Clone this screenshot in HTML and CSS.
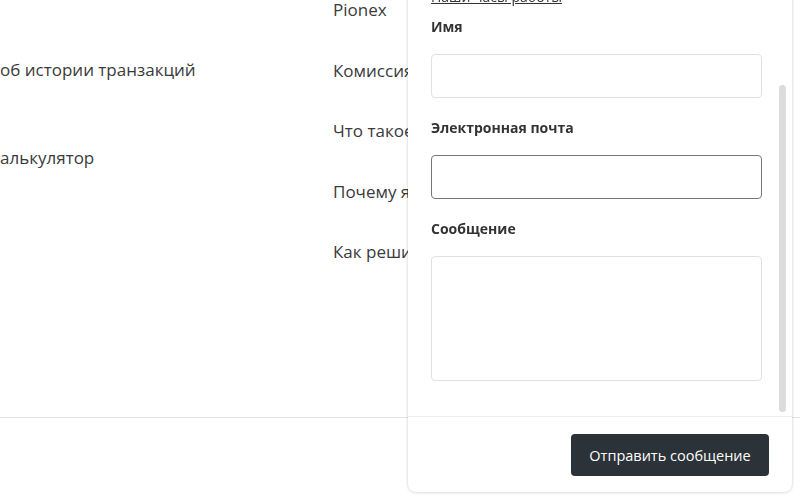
FILE: index.html
```html
<!DOCTYPE html>
<html lang="ru">
<head>
<meta charset="utf-8">
<link rel="stylesheet" href="styles.css">
</head>
<body>
<main class="page">
  <ul class="col col-left">
    <li>об истории транзакций</li>
    <li>алькулятор</li>
  </ul>
  <ul class="col col-mid">
    <li>Pionex</li>
    <li>Комиссия</li>
    <li>Что такое</li>
    <li>Почему я</li>
    <li>Как решить</li>
  </ul>
</main>
<footer class="page-footer"></footer>

<aside class="panel">
  <div class="panel-body">
    <a class="hours-link" href="#">Наши часы работы</a>
    <label class="field-label">Имя</label>
    <input class="field" type="text">
    <label class="field-label">Электронная почта</label>
    <input class="field field-focus" type="text">
    <label class="field-label">Сообщение</label>
    <textarea class="field field-area"></textarea>
  </div>
  <div class="scroll-thumb"></div>
  <div class="panel-footer">
    <button class="send-btn" type="button">Отправить сообщение</button>
  </div>
</aside>
</body>
</html>
```
FILE: styles.css
```css
* { box-sizing: border-box; }
html, body { margin: 0; padding: 0; }
body {
  font-family: "Open Sans", "Noto Sans", sans-serif;
  color: #333;
  background: #fff;
  width: 800px;
  height: 499px;
  overflow: hidden;
}
.page {
  display: grid;
  grid-template-columns: 333px 1fr;
  height: 417px;
}
.col {
  list-style: none;
  margin: 0;
  padding: 0;
  display: flex;
  flex-direction: column;
  font-size: 17px;
  line-height: 20px;
  color: #3a3a3a;
  white-space: nowrap;
}
.col-left { padding-top: 60px; gap: 68px; }
.col-mid { padding-top: 0; gap: 40.5px; }
.page-footer {
  border-top: 1px solid #e4e4e4;
  height: 82px;
}
.panel {
  position: fixed;
  left: 408px;
  right: 8px;
  top: -20px;
  bottom: 7px;
  background: #fff;
  border-radius: 8px;
  box-shadow: 0 0 3px rgba(0,0,0,0.18), 0 1px 4px rgba(0,0,0,0.06);
  display: flex;
  flex-direction: column;
}
.panel-body {
  flex: 1;
  display: flex;
  flex-direction: column;
  align-items: stretch;
  padding: 7px 30px 0 23px;
  overflow: hidden;
}
.hours-link {
  align-self: flex-start;
  font-size: 14px;
  line-height: 20px;
  color: #333;
  text-decoration: underline;
  margin-bottom: 10px;
}
.field-label {
  font-size: 14px;
  line-height: 20px;
  font-weight: 700;
  color: #333;
  margin-bottom: 17px;
}
.field {
  display: block;
  height: 44px;
  border: 1px solid #e1e1e1;
  border-radius: 4px;
  background: #fff;
  margin: 0 0 20px;
  font: inherit;
  outline: none;
}
.field-focus { border-color: #777; }
.field-area { height: 125px; resize: none; }
.scroll-thumb {
  position: absolute;
  right: 6px;
  top: 105px;
  width: 7px;
  height: 327px;
  border-radius: 4px;
  background: #dcdcdc;
}
.panel-footer {
  border-top: 1px solid #ececec;
  display: flex;
  justify-content: flex-end;
  padding: 17px 23px 16px;
}
.send-btn {
  width: 198px;
  height: 42px;
  border: 0;
  border-radius: 4px;
  background: #2b3238;
  color: #fff;
  font-family: "Open Sans", "Noto Sans", sans-serif;
  font-size: 14.5px;
}
```
